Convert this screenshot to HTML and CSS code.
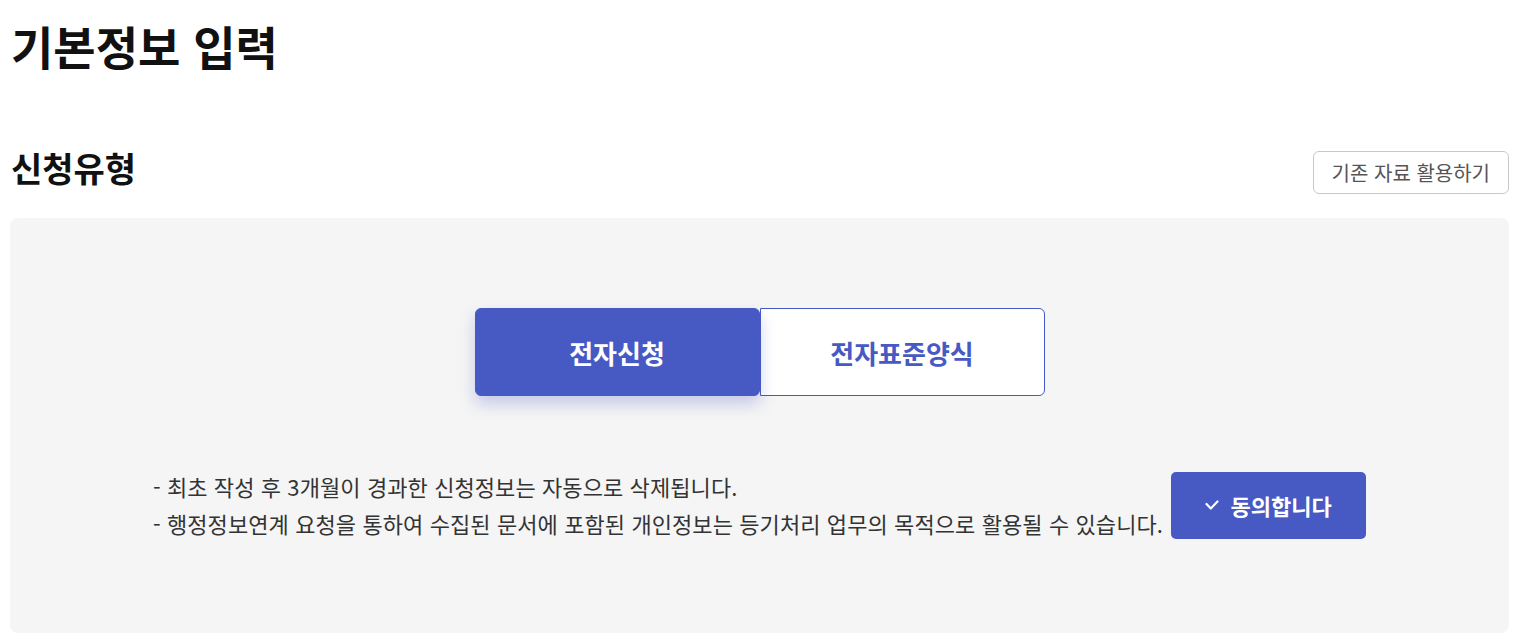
FILE: index.html
```html
<!DOCTYPE html>
<html lang="ko">
<head>
<meta charset="utf-8">
<link rel="stylesheet" href="styles.css">
</head>
<body>
<div class="page">
  <h1 class="title">기본정보 입력</h1>
  <div class="section-head">
    <h2 class="subtitle">신청유형</h2>
    <button class="ghost-btn">기존 자료 활용하기</button>
  </div>
  <div class="panel">
    <div class="toggle">
      <button class="tab active">전자신청</button>
      <button class="tab">전자표준양식</button>
    </div>
    <div class="agree-row">
      <div class="notes">
        <p>- 최초 작성 후 3개월이 경과한 신청정보는 자동으로 삭제됩니다.</p>
        <p>- 행정정보연계 요청을 통하여 수집된 문서에 포함된 개인정보는 등기처리 업무의 목적으로 활용될 수 있습니다.</p>
      </div>
      <button class="agree-btn"><svg class="check" viewBox="0 0 14 10" width="14" height="10"><path d="M1.5 4 L5.8 8.5 L12.5 1.5" fill="none" stroke="#fff" stroke-width="2.2" stroke-linecap="round" stroke-linejoin="round"/></svg>동의합니다</button>
    </div>
  </div>
</div>
</body>
</html>
```

FILE: styles.css
```css
* { box-sizing: border-box; }
html, body { margin: 0; padding: 0; background: #fff; }
body {
  font-family: "Noto Sans CJK KR", "Noto Sans", sans-serif;
  color: #222;
}
.page {
  padding: 0 16px 0 10px;
}
.title {
  margin: 0;
  padding: 15px 0 0 1px;
  font-size: 46px;
  line-height: 60px;
  font-weight: 700;
  color: #111;
}
.section-head {
  margin-top: 76px;
  display: flex;
  justify-content: space-between;
  align-items: flex-start;
  height: 43px;
}
.subtitle {
  margin: -2px 0 0 1px;
  font-size: 34px;
  line-height: 38px;
  font-weight: 700;
  color: #111;
}
.ghost-btn {
  font-family: inherit;
  height: 43px;
  padding: 0 18px;
  background: #fff;
  border: 1px solid #c8c8c8;
  border-radius: 6px;
  font-size: 20px;
  color: #555;
  cursor: pointer;
}
.panel {
  margin-top: 24px;
  background: #f5f5f5;
  border-radius: 8px;
  padding: 90px 0 91px;
  display: flex;
  flex-direction: column;
  align-items: center;
  gap: 72px;
}
.toggle {
  display: flex;
}
.tab {
  font-family: inherit;
  width: 285px;
  height: 88px;
  font-size: 26px;
  font-weight: 700;
  color: #4759c3;
  background: #fff;
  border: 1px solid #4759c3;
  cursor: pointer;
}
.tab:first-child { border-radius: 6px 0 0 6px; }
.tab:last-child { border-radius: 0 6px 6px 0; }
.tab.active {
  background: #4759c3;
  color: #fff;
  border-radius: 6px;
  box-shadow: 0 8px 16px rgba(71, 89, 195, 0.28);
  position: relative;
  z-index: 1;
}
.agree-row {
  display: flex;
  align-items: center;
  gap: 8px;
}
.notes p {
  margin: 0;
  font-size: 22px;
  line-height: 37px;
  color: #333;
  letter-spacing: 0.09px;
}
.agree-btn {
  font-family: inherit;
  width: 195px;
  height: 67px;
  background: #4759c3;
  color: #fff;
  border: none;
  border-radius: 5px;
  font-size: 22px;
  font-weight: 700;
  display: flex;
  align-items: center;
  justify-content: center;
  gap: 11px;
  cursor: pointer;
}
.check { display: block; }
```
